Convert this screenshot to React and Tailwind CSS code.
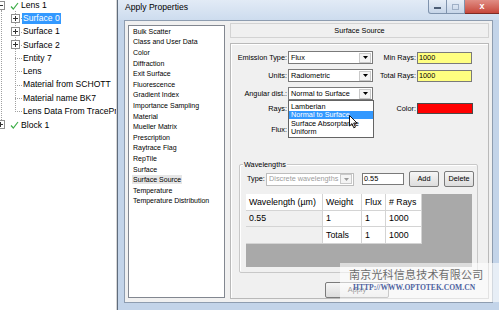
import React from 'react';

const Expander = ({ open }) => (
  <svg width="9" height="9" viewBox="0 0 9 9" className="block">
    <rect x="0.5" y="0.5" width="8" height="8" fill="#fff" stroke="#8f8f8f" />
    <line x1="2" y1="4.5" x2="7" y2="4.5" stroke="#333" />
    {!open ? <line x1="4.5" y1="2" x2="4.5" y2="7" stroke="#333" /> : null}
  </svg>
);

const Check = () => (
  <svg width="9" height="8" viewBox="0 0 9 8" className="block">
    <path d="M1 4.5 L3.3 7 L8 1" fill="none" stroke="#3fae49" strokeWidth="1.2" />
  </svg>
);

const treeChildren = [
  { label: 'Surface 0', expander: true, selected: true },
  { label: 'Surface 1', expander: true },
  { label: 'Surface 2', expander: true },
  { label: 'Entity 7' },
  { label: 'Lens' },
  { label: 'Material from SCHOTT' },
  { label: 'Material name BK7' },
  { label: 'Lens Data From TracePro' }
];

const listItems = [
  'Bulk Scatter',
  'Class and User Data',
  'Color',
  'Diffraction',
  'Exit Surface',
  'Fluorescence',
  'Gradient Index',
  'Importance Sampling',
  'Material',
  'Mueller Matrix',
  'Prescription',
  'Raytrace Flag',
  'RepTile',
  'Surface',
  'Surface Source',
  'Temperature',
  'Temperature Distribution'
];

const Arrow = ({ disabled }) => (
  <div className="ml-auto mr-[1px] flex h-[10px] w-[12px] items-center justify-center border border-[#c9c9c9] bg-[#f4f4f4]">
    <svg width="5" height="3" viewBox="0 0 5 3">
      <path d="M0 0 H5 L2.5 3 Z" fill={disabled ? '#9a9a9a' : '#000'} />
    </svg>
  </div>
);

const Select = ({ value, width = 'w-[85px]', disabled }) => (
  <div className={`flex h-[13px] ${width} items-center border ${disabled ? 'border-[#bdbdbd] text-[#9d9d9d]' : 'border-[#7a7a7a] text-black'} bg-white`}>
    <span className="pl-[2px] leading-none">{value}</span>
    <Arrow disabled={disabled} />
  </div>
);

const Button = ({ children, width }) => (
  <div className={`flex h-[16px] ${width} items-center justify-center rounded-[2px] border border-[#7b7b7b] bg-gradient-to-b from-[#f6f6f6] to-[#dddddd] text-[7.3px] leading-none`}>
    {children}
  </div>
);

const Cell = ({ children, w, gray }) => (
  <div className={`${w} flex h-full items-center border-r border-b border-[#d4d4d4] pl-[3px] ${gray ? 'bg-[#f0f0f0]' : 'bg-white'}`}>
    {children}
  </div>
);

export default function App() {
  return (
    <div className="relative flex h-[310px] w-[499px] overflow-hidden bg-white font-['Liberation_Sans',sans-serif] text-black">
      {/* tree */}
      <div className="relative w-[117px] shrink-0 overflow-hidden border-r border-[#d6d6d6] text-[8.6px]">
        <div className="absolute left-[1px] top-[10px] h-[116px] border-l border-dotted border-[#a0a0a0]" />
        <div className="absolute left-[15px] top-[11px] h-[101px] border-l border-dotted border-[#a0a0a0]" />
        <div className="-mt-[1.5px]">
          <div className="relative flex h-[13.3px] items-center">
            <div className="absolute -left-[4px] top-[2px]"><Expander open /></div>
            <div className="absolute left-[10px] top-[3px]"><Check /></div>
            <span className="pl-[21px] leading-none">Lens 1</span>
          </div>
          {treeChildren.map((item) => (
            <div key={item.label} className="relative flex h-[13.3px] items-center">
              <div className="absolute left-[15px] top-[6.5px] w-[7px] border-t border-dotted border-[#a0a0a0]" />
              {item.expander ? <div className="absolute left-[11px] top-[2px]"><Expander /></div> : null}
              <span
                className={`ml-[22px] whitespace-nowrap px-[1px] leading-[11px] ${item.selected ? 'bg-[#3399ff] text-white' : ''}`}
              >
                {item.label}
              </span>
            </div>
          ))}
          <div className="relative flex h-[13.3px] items-center">
            <div className="absolute -left-[4px] top-[2px]"><Expander /></div>
            <div className="absolute left-[10px] top-[3px]"><Check /></div>
            <span className="pl-[21px] leading-none">Block 1</span>
          </div>
        </div>
      </div>

      {/* dialog */}
      <div className="flex flex-1 flex-col border-l border-[#5f6c7c] bg-[#c3d4e9]">
        <div className="relative h-[20px] shrink-0 bg-gradient-to-b from-[#e2ebf6] to-[#cddcee]">
          <div className="pl-[7px] pt-[2px] text-[8.6px] leading-[10px] text-black">Apply Properties</div>
          <div className="absolute right-0 top-0 flex h-[14px]">
            <div className="flex w-[19px] items-center justify-center rounded-bl-[3px] border border-t-0 border-[#7f93ad] bg-gradient-to-b from-[#e7eef7] to-[#c6d5e8]">
              <div className="mt-[3px] h-[2px] w-[7px] border border-[#4d5e75] bg-white" />
            </div>
            <div className="flex w-[18px] items-center justify-center border-b border-r border-[#7f93ad] bg-gradient-to-b from-[#e7eef7] to-[#c6d5e8]">
              <div className="h-[6px] w-[7px] border border-[#9fb0c6]" />
            </div>
            <div className="flex w-[34px] items-center justify-center border-b border-[#7d2b24] bg-gradient-to-b from-[#e08d84] to-[#c6463b] text-[9px] font-bold leading-none text-white">
              x
            </div>
          </div>
        </div>

        <div className="mx-[6px] flex h-[283px] gap-[5px] border border-[#8e9db0] bg-[#f0f0f0] px-[3px] pt-[4px]">
          {/* category list */}
          <div className="h-[273px] w-[97px] shrink-0 border border-[#828790] bg-white text-[7px]">
            {listItems.map((item) => (
              <div key={item} className="flex h-[10.6px] items-center pl-[3px]">
                <span className={`px-[1px] leading-[9px] ${item === 'Surface Source' ? 'bg-[#e6e6e6]' : ''}`}>{item}</span>
              </div>
            ))}
          </div>

          {/* right column */}
          <div className="flex w-[259px] flex-col text-[7.3px]">
            <div className="-mt-[2px] flex h-[15px] shrink-0 items-center justify-center border border-[#d3d3d3] bg-[#f0f0f0] leading-none">
              Surface Source
            </div>

            <div className="relative mt-[5px] h-[256px] border border-[#b9b9b9] shadow-[inset_1px_1px_0_#ffffff]">
              <div className="mt-[7px] flex h-[13px] items-center">
                <div className="w-[56px] text-right leading-none">Emission Type:</div>
                <div className="ml-[1px]"><Select value="Flux" /></div>
                <div className="w-[43px] text-right leading-none">Min Rays:</div>
                <div className="ml-[1px] flex h-[12px] w-[55px] items-center border border-[#7a7a7a] bg-[#ffff80] pl-[1px] leading-none">1000</div>
              </div>
              <div className="mt-[5px] flex h-[13px] items-center">
                <div className="w-[56px] text-right leading-none">Units:</div>
                <div className="ml-[1px]"><Select value="Radiometric" /></div>
                <div className="w-[43px] text-right leading-none">Total Rays:</div>
                <div className="ml-[1px] flex h-[12px] w-[55px] items-center border border-[#7a7a7a] bg-[#ffff80] pl-[1px] leading-none">1000</div>
              </div>
              <div className="mt-[5px] flex h-[13px] items-center">
                <div className="w-[56px] text-right leading-none">Angular dist.:</div>
                <div className="ml-[1px]"><Select value="Normal to Surface" /></div>
              </div>
              <div className="mt-[2px] flex h-[13px] items-center">
                <div className="w-[56px] text-right leading-none">Rays:</div>
                <div className="ml-[1px] h-[12px] w-[85px] border border-[#7a7a7a] bg-white" />
                <div className="w-[43px] text-right leading-none">Color:</div>
                <div className="ml-[1px] h-[11px] w-[56px] border border-[#4a4a4a] bg-[#ff0000]" />
              </div>
              <div className="mt-[8px] flex h-[13px] items-center">
                <div className="w-[56px] text-right leading-none">Flux:</div>
                <div className="ml-[1px] h-[12px] w-[85px] border border-[#7a7a7a] bg-white" />
              </div>

              {/* wavelengths group */}
              <div className="relative ml-[8px] mt-[28px] h-[109px] w-[239px] rounded-[2px] border border-[#c8c8c8] shadow-[inset_1px_1px_0_#ffffff]">
                <div className="absolute -top-[5px] left-[3px] bg-[#f0f0f0] px-[1px] leading-[9px]">Wavelengths</div>
                <div className="mt-[6px] flex h-[16px] items-center">
                  <div className="ml-[7px] w-[19px] leading-none">Type:</div>
                  <Select value="Discrete wavelengths" width="w-[88px]" disabled />
                  <div className="ml-[8px] flex h-[12px] w-[42px] items-center border border-[#7a7a7a] bg-white pl-[1px] leading-none">0.55</div>
                  <div className="ml-[5px]"><Button width="w-[30px]">Add</Button></div>
                  <div className="ml-[5px]"><Button width="w-[30px]">Delete</Button></div>
                </div>
                <div className="ml-[6px] mt-[7px] h-[73px] w-[226px] bg-[#a9a9a9] text-[8.8px]">
                  <div className="flex h-[17px] w-[176px] leading-none">
                    <Cell w="w-[77px]">Wavelength (µm)</Cell>
                    <Cell w="w-[39px]">Weight</Cell>
                    <Cell w="w-[24px]">Flux</Cell>
                    <Cell w="w-[36px]"># Rays</Cell>
                  </div>
                  <div className="flex h-[16px] w-[176px] leading-none">
                    <Cell w="w-[77px]" gray>0.55</Cell>
                    <Cell w="w-[39px]">1</Cell>
                    <Cell w="w-[24px]">1</Cell>
                    <Cell w="w-[36px]">1000</Cell>
                  </div>
                  <div className="flex h-[17px] w-[176px] leading-none">
                    <Cell w="w-[77px]" gray />
                    <Cell w="w-[39px]">Totals</Cell>
                    <Cell w="w-[24px]">1</Cell>
                    <Cell w="w-[36px]">1000</Cell>
                  </div>
                </div>
              </div>

              <div className="ml-[94px] mt-[9px]">
                <Button width="w-[64px]">Apply</Button>
              </div>

              {/* open dropdown */}
              <div className="absolute left-[57px] top-[56px] w-[86px] border border-[#646464] bg-white py-[1px]">
                <div className="flex h-[8.5px] items-center pl-[2px] leading-none">Lamberian</div>
                <div className="flex h-[8.5px] items-center bg-[#3399ff] pl-[2px] leading-none text-white">Normal to Surface</div>
                <div className="flex h-[8.5px] items-center pl-[2px] leading-none">Surface Absorptance</div>
                <div className="flex h-[8.5px] items-center pl-[2px] leading-none">Uniform</div>
              </div>
              <svg className="absolute left-[118px] top-[71px]" width="9" height="14" viewBox="0 0 9 14">
                <path d="M0.5 0.5 V11 L3 8.6 L4.8 12.8 L6.4 12.1 L4.7 8 H8 Z" fill="#fff" stroke="#000" strokeWidth="0.9" />
              </svg>
            </div>
          </div>
        </div>
      </div>

      {/* watermark */}
      <div className="absolute left-[340px] top-[263px] flex h-[39px] w-[159px] flex-col items-start bg-white/60 pl-[9px] pt-[5px]">
        <div className="font-['Noto_Sans_CJK_SC',sans-serif] text-[11px] leading-[13px] tracking-[0.2px] text-[#6d6d6d]">南京光科信息技术有限公司</div>
        <div className="ml-[4px] mt-[3px] font-['Liberation_Serif',serif] text-[7.6px] font-bold leading-none text-[#4d62a0]">HTTP://WWW.OPTOTEK.COM.CN</div>
      </div>
    </div>
  );
}
